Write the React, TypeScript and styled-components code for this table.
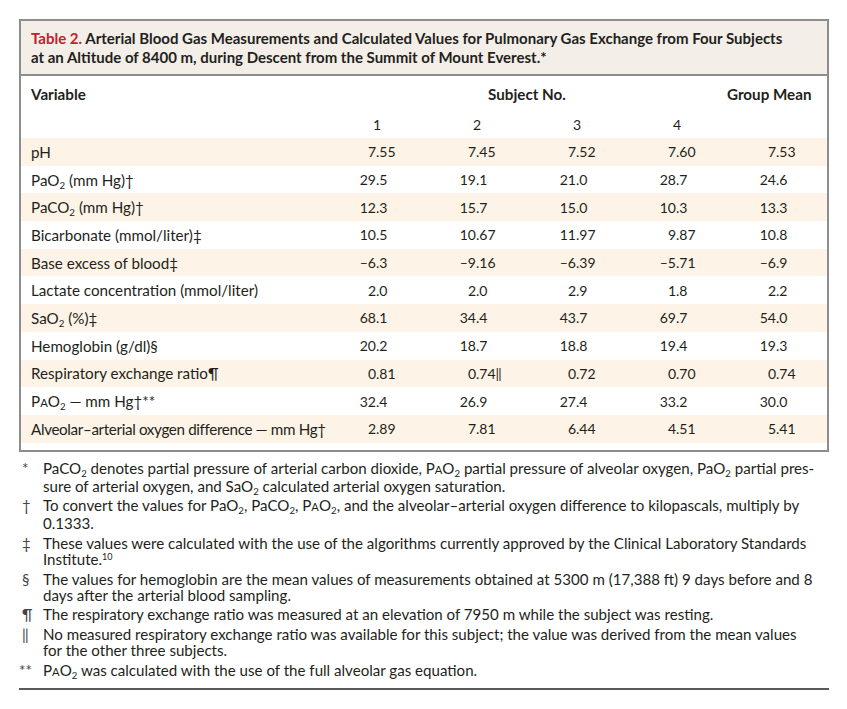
import React from 'react'
import styled, { createGlobalStyle } from 'styled-components'

const GlobalStyle = createGlobalStyle`
  body {
    margin: 0;
    background: #ffffff;
    font-family: 'Lato', 'Liberation Sans', sans-serif;
    color: #231f20;
  }
`

const Page = styled.div`
  width: 810px;
  padding: 19px 0 0 19px;
`

const TableBox = styled.div`
  border: 2px solid #8d8d8d;
`

const Caption = styled.div`
  background: #f3eee8;
  border-bottom: 2px solid #8d8d8d;
  padding: 8px 12px 7px 10px;
  font-size: 15px;
  line-height: 19px;
  font-weight: 700;
`

const CaptionLabel = styled.span`
  color: #c3202f;
`

const Grid = styled.div`
  display: grid;
  grid-template-columns: minmax(0, 1fr) repeat(5, 100px);
  align-items: center;
  padding-left: 10px;
  font-size: 15.2px;
`

const HeadRow = styled(Grid)`
  padding-top: 10px;
  line-height: 16px;
  font-weight: 700;
`

const SubjectHead = styled.div`
  grid-column: 2 / 6;
  text-align: center;
`

const MeanHead = styled.div`
  white-space: nowrap;
`

const NumberRow = styled(Grid)`
  margin-top: 15px;
  margin-bottom: 5px;
  line-height: 16px;
  font-size: 14px;
`

const NumHead = styled.div`
  width: 54px;
  text-align: right;
`

const Body = styled.div`
  padding-bottom: 7px;
`

const Row = styled(Grid)<{ $shade: boolean }>`
  height: 27.7px;
  background: ${p => (p.$shade ? '#fdf3e6' : 'transparent')};
  white-space: nowrap;
`

const Label = styled.div<{ $tight?: boolean }>`
  letter-spacing: ${p => (p.$tight ? '-0.35px' : 'normal')};
`

const Cell = styled.div`
  display: flex;
  font-size: 14px;
`

const IntPart = styled.span`
  width: 49px;
  text-align: right;
`

const Sub = styled.sub`
  font-size: 0.64em;
  vertical-align: -0.3em;
  line-height: 0;
`

const Sup = styled.sup`
  font-size: 0.6em;
  vertical-align: 0.55em;
  line-height: 0;
`

const SmallCap = styled.span`
  font-size: 0.74em;
`

const Notes = styled.div`
  margin-top: 8px;
  font-size: 15.1px;
  line-height: 16px;
`

const Note = styled.div`
  display: flex;
  margin-bottom: 3.7px;
`

const Mark = styled.div<{ $shift?: number }>`
  width: 24px;
  flex: none;
  padding-left: ${p => 3 - (p.$shift || 0)}px;
  box-sizing: border-box;
  color: #444;
`

const NoteLine = styled.div`
  white-space: nowrap;
`

const Rule = styled.div`
  margin-top: 8px;
  height: 2px;
  background: #5a5a5a;
`

const PAO2 = () => <>P<SmallCap>A</SmallCap>O<Sub>2</Sub></>

type RowData = { label: React.ReactNode; values: string[]; tight?: boolean }

const rows: RowData[] = [
  { label: 'pH', values: ['7.55', '7.45', '7.52', '7.60', '7.53'] },
  { label: <>PaO<Sub>2</Sub> (mm Hg)†</>, values: ['29.5', '19.1', '21.0', '28.7', '24.6'] },
  { label: <>PaCO<Sub>2</Sub> (mm Hg)†</>, values: ['12.3', '15.7', '15.0', '10.3', '13.3'] },
  { label: 'Bicarbonate (mmol/liter)‡', values: ['10.5', '10.67', '11.97', '9.87', '10.8'] },
  { label: 'Base excess of blood‡', values: ['–6.3', '–9.16', '–6.39', '–5.71', '–6.9'] },
  { label: 'Lactate concentration (mmol/liter)', values: ['2.0', '2.0', '2.9', '1.8', '2.2'] },
  { label: <>SaO<Sub>2</Sub> (%)‡</>, values: ['68.1', '34.4', '43.7', '69.7', '54.0'] },
  { label: 'Hemoglobin (g/dl)§', values: ['20.2', '18.7', '18.8', '19.4', '19.3'] },
  { label: 'Respiratory exchange ratio¶', values: ['0.81', '0.74‖', '0.72', '0.70', '0.74'] },
  { label: <><PAO2 /> — mm Hg†**</>, values: ['32.4', '26.9', '27.4', '33.2', '30.0'] },
  { label: 'Alveolar–arterial oxygen difference — mm Hg†', values: ['2.89', '7.81', '6.44', '4.51', '5.41'], tight: true },
]

const NumCell = ({ value }: { value: string }) => {
  const dot = value.indexOf('.')
  return <Cell>
    <IntPart>{value.slice(0, dot)}</IntPart>
    <span>{value.slice(dot)}</span>
  </Cell>
}

const notes: { mark: string; shift?: number; lines: React.ReactNode[] }[] = [
  {
    mark: '*',
    lines: [
      <>PaCO<Sub>2</Sub> denotes partial pressure of arterial carbon dioxide, <PAO2 /> partial pressure of alveolar oxygen, PaO<Sub>2</Sub> partial pres-</>,
      <>sure of arterial oxygen, and SaO<Sub>2</Sub> calculated arterial oxygen saturation.</>,
    ],
  },
  {
    mark: '†',
    lines: [
      <>To convert the values for PaO<Sub>2</Sub>, PaCO<Sub>2</Sub>, <PAO2 />, and the alveolar–arterial oxygen difference to kilopascals, multiply by</>,
      '0.1333.',
    ],
  },
  {
    mark: '‡',
    lines: [
      'These values were calculated with the use of the algorithms currently approved by the Clinical Laboratory Standards',
      <>Institute.<Sup>10</Sup></>,
    ],
  },
  {
    mark: '§',
    lines: [
      'The values for hemoglobin are the mean values of measurements obtained at 5300 m (17,388 ft) 9 days before and 8',
      'days after the arterial blood sampling.',
    ],
  },
  {
    mark: '¶',
    lines: ['The respiratory exchange ratio was measured at an elevation of 7950 m while the subject was resting.'],
  },
  {
    mark: '‖',
    lines: [
      'No measured respiratory exchange ratio was available for this subject; the value was derived from the mean values',
      'for the other three subjects.',
    ],
  },
  {
    mark: '**',
    shift: 4,
    lines: [<><PAO2 /> was calculated with the use of the full alveolar gas equation.</>],
  },
]

const App = () => {
  return <Page>
    <GlobalStyle />

    <TableBox>
      <Caption>
        <CaptionLabel>Table 2.</CaptionLabel> Arterial Blood Gas Measurements and Calculated Values for Pulmonary Gas Exchange from Four Subjects
        <br />
        at an Altitude of 8400 m, during Descent from the Summit of Mount Everest.*
      </Caption>

      <HeadRow>
        <div>Variable</div>
        <SubjectHead>Subject No.</SubjectHead>
        <MeanHead>Group Mean</MeanHead>
      </HeadRow>

      <NumberRow>
        <div />
        {['1', '2', '3', '4'].map(n => <NumHead key={n}>{n}</NumHead>)}
        <div />
      </NumberRow>

      <Body>
        {rows.map((row, i) => (
          <Row key={i} $shade={i % 2 === 0}>
            <Label $tight={row.tight}>{row.label}</Label>
            {row.values.map((v, j) => <NumCell key={j} value={v} />)}
          </Row>
        ))}
      </Body>
    </TableBox>

    <Notes>
      {notes.map(note => (
        <Note key={note.mark}>
          <Mark $shift={note.shift}>{note.mark}</Mark>
          <div>
            {note.lines.map((line, i) => <NoteLine key={i}>{line}</NoteLine>)}
          </div>
        </Note>
      ))}
    </Notes>

    <Rule />
  </Page>
}

export default App
